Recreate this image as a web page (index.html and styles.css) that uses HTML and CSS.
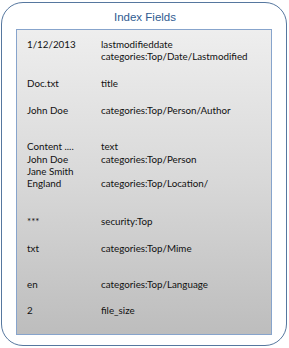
FILE: index.html
```html
<!DOCTYPE html>
<html>
<head>
<meta charset="utf-8">
<link rel="stylesheet" href="styles.css">
</head>
<body>
<div class="frame">
  <div class="title">Index Fields</div>
  <div class="panel">
    <div class="group">
      <div class="key">1/12/2013</div>
      <div class="val">lastmodifieddate<br>categories:Top/Date/Lastmodified</div>
    </div>
    <div class="group gap-s">
      <div class="key">Doc.txt</div>
      <div class="val">title</div>
    </div>
    <div class="group gap-s">
      <div class="key">John Doe</div>
      <div class="val">categories:Top/Person/Author</div>
    </div>
    <div class="group gap-m">
      <div class="key">Content ....<br>John Doe<br>Jane Smith<br>England</div>
      <div class="val">text<br>categories:Top/Person<br><br>categories:Top/Location/</div>
    </div>
    <div class="group gap-xl">
      <div class="key">***</div>
      <div class="val">security:Top</div>
    </div>
    <div class="group gap-s">
      <div class="key">txt</div>
      <div class="val">categories:Top/Mime</div>
    </div>
    <div class="group gap-l">
      <div class="key">en</div>
      <div class="val">categories:Top/Language</div>
    </div>
    <div class="group gap-s">
      <div class="key">2</div>
      <div class="val">file_size</div>
    </div>
  </div>
</div>
</body>
</html>
```
FILE: styles.css
```css
html, body {
  margin: 0;
  padding: 0;
  background: #ffffff;
}
body {
  width: 289px;
  height: 348px;
  overflow: hidden;
}
.frame {
  box-sizing: border-box;
  margin: 2px 2px 0 1px;
  width: 286px;
  height: 344px;
  border: 1.5px solid #56779f;
  border-radius: 22px;
  padding: 0 14px 0 14px;
  display: flex;
  flex-direction: column;
}
.title {
  font-family: "Liberation Sans", Arial, sans-serif;
  font-size: 11.5px;
  color: #2f5b91;
  text-align: center;
  height: 26px;
  line-height: 29px;
  padding-left: 2px;
}
.panel {
  box-sizing: border-box;
  width: 256px;
  height: 306px;
  border: 1.5px solid #87a4cc;
  background: linear-gradient(to bottom, #eeeeee 0%, #d8d8d8 50%, #bdbdbd 100%);
  padding: 7.5px 0 0 10px;
  font-family: "Lato", "Open Sans", sans-serif;
  font-size: 9.8px;
  line-height: 12.4px;
  color: #111111;
}
.group {
  display: grid;
  grid-template-columns: 74px 1fr;
}
.gap-s {
  margin-top: 14.5px;
}
.gap-m {
  margin-top: 24px;
}
.gap-l {
  margin-top: 23px;
}
.gap-xl {
  margin-top: 25.5px;
}
```
